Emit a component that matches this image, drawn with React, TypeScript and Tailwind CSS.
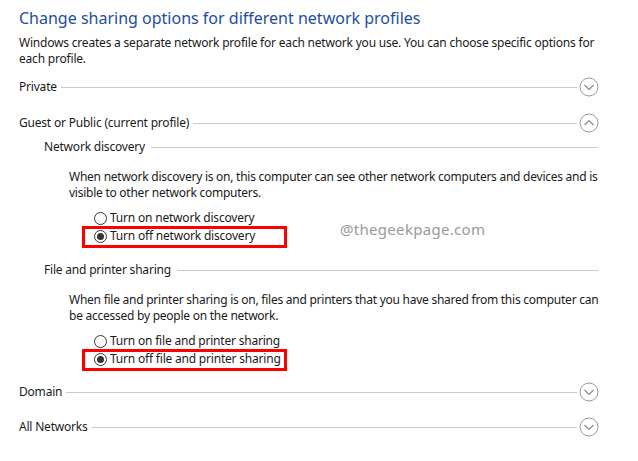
import React from 'react';

const font = { fontFamily: '"Noto Sans", "Open Sans", sans-serif' };

function Chevron({ up }: { up?: boolean }) {
  return (
    <svg width="20" height="20" viewBox="0 0 20 20" className="ml-[2px] shrink-0">
      <circle cx="10" cy="10" r="9" fill="white" stroke="#9a9a9a" strokeWidth="1" />
      <polyline
        points={up ? '5.5,12 10,7.5 14.5,12' : '5.5,8 10,12.5 14.5,8'}
        fill="none"
        stroke="#8a8a8a"
        strokeWidth="1.2"
      />
    </svg>
  );
}

function Profile({ label, up, className }: { label: string; up?: boolean; className?: string }) {
  return (
    <div className={`flex h-[20px] items-center pl-[19px] pr-[39px] ${className ?? ''}`}>
      <span className="whitespace-nowrap text-[12px] tracking-[-0.2px] text-[#1a1a1a]">{label}</span>
      <div className="ml-[4px] h-px flex-1 bg-[#c9c9c9]" />
      <Chevron up={up} />
    </div>
  );
}

function SubHeader({ label, className }: { label: string; className?: string }) {
  return (
    <div className={`flex h-[20px] items-center pl-[44px] pr-[40px] ${className ?? ''}`}>
      <span className="whitespace-nowrap text-[12px] tracking-[-0.2px] text-[#1a1a1a]">{label}</span>
      <div className="ml-[6px] h-px flex-1 bg-[#c9c9c9]" />
    </div>
  );
}

function Radio({ label, checked, boxed }: { label: string; checked?: boolean; boxed?: boolean }) {
  return (
    <div className="relative flex h-[18px] items-center pl-[94px]">
      {boxed ? (
        <div className="absolute left-[82px] top-[-1px] h-[22px] w-[205px] border-[3px] border-[#ff0000]" />
      ) : null}
      <span className="flex h-[13px] w-[13px] items-center justify-center rounded-full border border-[#333333] bg-white">
        {checked ? <span className="h-[7px] w-[7px] rounded-full bg-[#333333]" /> : null}
      </span>
      <span className="ml-[3px] whitespace-nowrap text-[12px] tracking-[-0.2px] text-[#1a1a1a]">{label}</span>
    </div>
  );
}

export default function App() {
  return (
    <div className="relative h-[461px] w-[638px] overflow-hidden bg-white" style={font}>
      <div className="flex h-[35px] items-center pl-[19px] text-[16px] text-[#1e4ea0]">
        Change sharing options for different network profiles
      </div>
      <p className="whitespace-nowrap pl-[19px] text-[12px] leading-[16px] tracking-[-0.2px] text-[#1a1a1a]">
        Windows creates a separate network profile for each network you use. You can choose specific options for
        <br />
        each profile.
      </p>

      <Profile label="Private" className="mt-[10px]" />
      <Profile label="Guest or Public (current profile)" up className="mt-[16px]" />

      <SubHeader label="Network discovery" className="mt-[4px]" />
      <p className="mt-[12px] whitespace-nowrap pl-[69px] text-[12px] leading-[16px] tracking-[-0.25px] text-[#1a1a1a]">
        When network discovery is on, this computer can see other network computers and devices and is
        <br />
        visible to other network computers.
      </p>
      <div className="mt-[8px]">
        <Radio label="Turn on network discovery" />
        <Radio label="Turn off network discovery" checked boxed />
      </div>

      <SubHeader label="File and printer sharing" className="mt-[15px]" />
      <p className="mt-[12px] whitespace-nowrap pl-[69px] text-[12px] leading-[16px] tracking-[-0.25px] text-[#1a1a1a]">
        When file and printer sharing is on, files and printers that you have shared from this computer can
        <br />
        be accessed by people on the network.
      </p>
      <div className="mt-[8px]">
        <Radio label="Turn on file and printer sharing" />
        <Radio label="Turn off file and printer sharing" checked boxed />
      </div>

      <Profile label="Domain" className="mt-[14px]" />
      <Profile label="All Networks" className="mt-[15px]" />

      <div className="absolute left-[340px] top-[218px] text-[15px] tracking-[0.3px] text-[#9a9a9a]">
        @thegeekpage.com
      </div>
    </div>
  );
}
